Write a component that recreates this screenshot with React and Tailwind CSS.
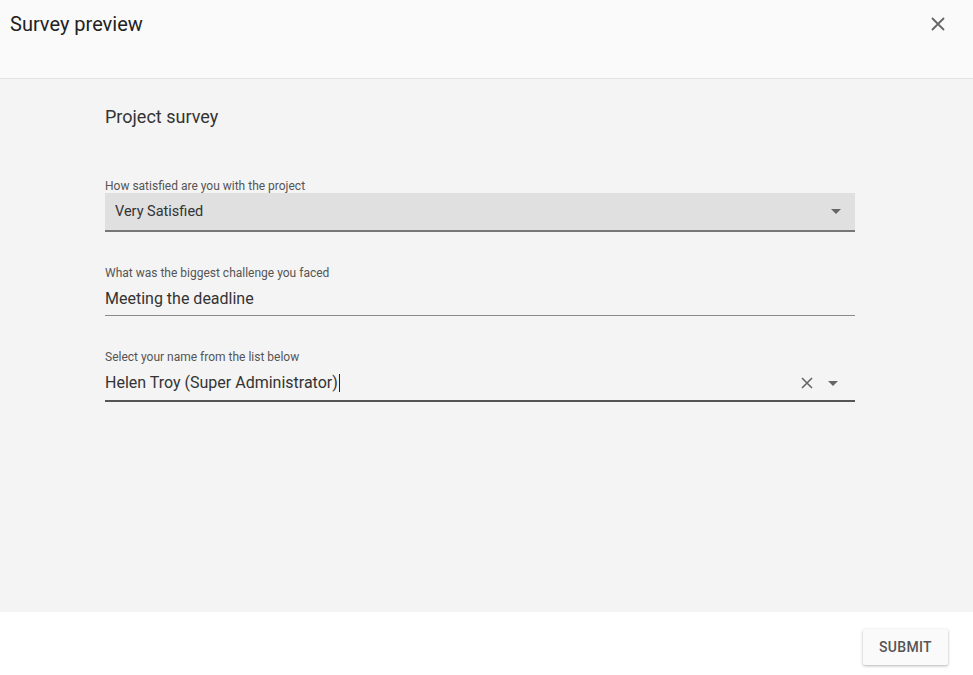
export default function App() {
  return (
    <div className="w-[973px] h-[675px] flex flex-col bg-white text-[#212121]" style={{ fontFamily: 'Roboto, "Noto Sans", sans-serif' }}>
      <div className="h-[79px] bg-[#fafafa] border-b border-[#e3e3e3] flex items-start justify-between px-[10px] pt-[11px] shrink-0">
        <div className="text-[20px] leading-[26px] font-normal text-[#222]">Survey preview</div>
        <button className="w-[24px] h-[24px] mr-[13px] mt-[1px] flex items-center justify-center text-[#666]">
          <svg width="14" height="14" viewBox="0 0 14 14"><path d="M1 1L13 13M13 1L1 13" stroke="currentColor" strokeWidth="1.8" /></svg>
        </button>
      </div>
      <div className="flex-1 bg-[#f4f4f4] px-[105px] pt-[27px]">
        <div className="w-[750px]">
          <div className="text-[18px] leading-[22px] text-[#333]">Project survey</div>
          <div className="mt-[51px]">
            <div className="text-[12px] leading-[14px] text-[#555]">How satisfied are you with the project</div>
            <div className="h-[39px] bg-[#e0e0e0] border-b-2 border-[#777] flex items-center justify-between pl-[10px] pr-[14px]">
              <span className="text-[14.5px] text-[#333]">Very Satisfied</span>
              <svg width="10" height="5" viewBox="0 0 10 5"><path d="M0 0L10 0L5 5Z" fill="#666" /></svg>
            </div>
          </div>
          <div className="mt-[34px]">
            <div className="text-[12px] leading-[14px] text-[#555]">What was the biggest challenge you faced</div>
            <div className="h-[36px] border-b border-[#8a8a8a] flex items-center pt-[2px]">
              <span className="text-[16px] text-[#333]">Meeting the deadline</span>
            </div>
          </div>
          <div className="mt-[34px]">
            <div className="text-[12px] leading-[14px] text-[#555]">Select your name from the list below</div>
            <div className="h-[38px] border-b-2 border-[#555] flex items-center justify-between pr-[17px] pt-[2px]">
              <span className="text-[16px] text-[#333] flex items-center">Helen Troy (Super Administrator)<span className="inline-block w-px h-[18px] bg-[#222] ml-[1px]"></span></span>
              <div className="flex items-center gap-[15px]">
                <svg width="12" height="12" viewBox="0 0 12 12"><path d="M1 1L11 11M11 1L1 11" stroke="#666" strokeWidth="1.6" /></svg>
                <svg width="10" height="5" viewBox="0 0 10 5"><path d="M0 0L10 0L5 5Z" fill="#666" /></svg>
              </div>
            </div>
          </div>
        </div>
      </div>
      <div className="h-[63px] bg-white flex items-start justify-end pr-[25px] pt-[17px] shrink-0">
        <button className="w-[85px] h-[36px] bg-[#fafafa] rounded-[2px] shadow-[0_1px_3px_rgba(0,0,0,0.3)] text-[14px] font-medium text-[#555] tracking-[0.3px]">SUBMIT</button>
      </div>
    </div>
  );
}
